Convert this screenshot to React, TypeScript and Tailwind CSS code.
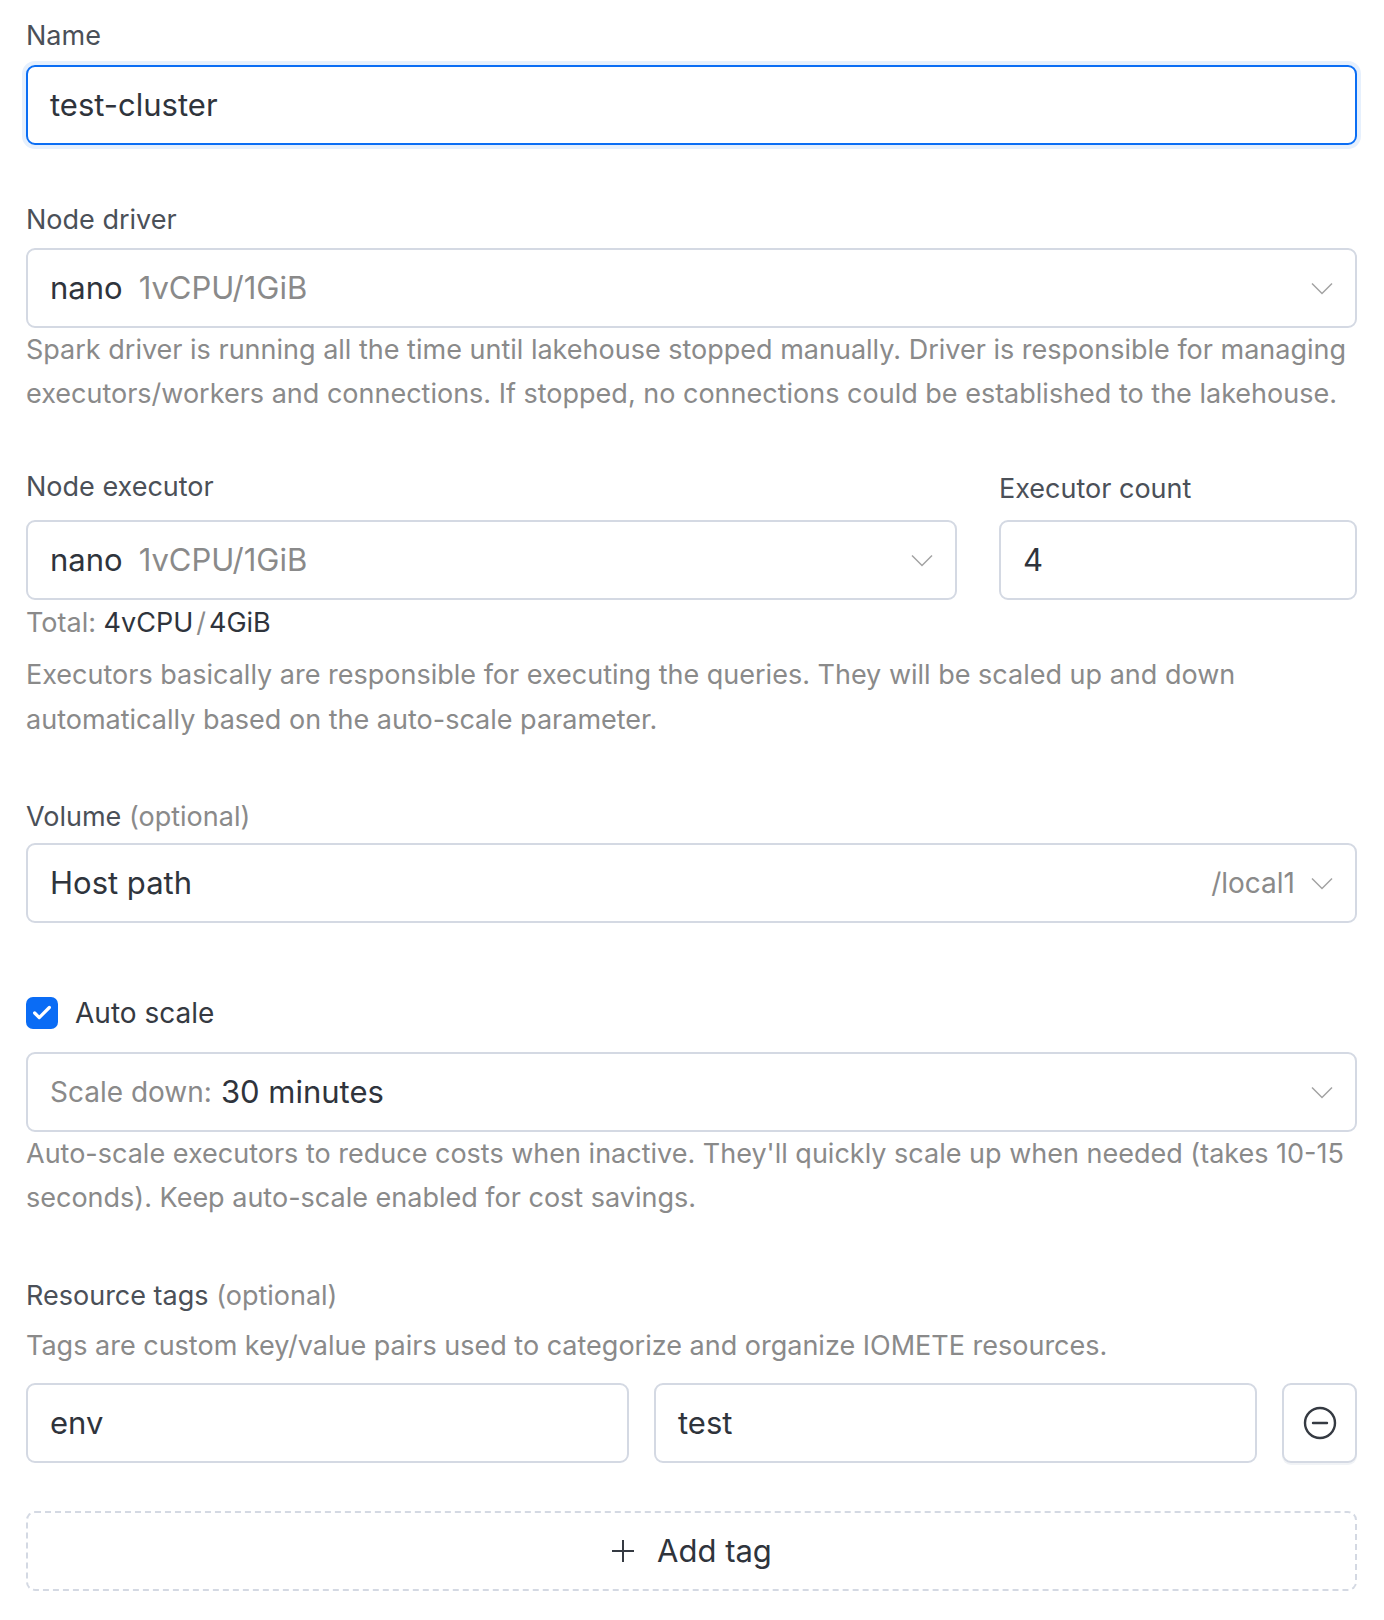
import { Check } from 'lucide-react'

const labelCls = 'text-[27px] leading-[36px] text-[#4b5058]'
const helpCls = 'text-[27px] leading-[44px] text-[#8a8a8a]'
const boxCls =
  'flex h-[80px] items-center rounded-[9px] border-2 border-[#d4d9e3] bg-white px-[22px] text-[31px] text-[#2f343c]'

function Chevron() {
  return (
    <svg width="22" height="13" viewBox="0 0 22 13" fill="none" className="shrink-0">
      <polyline points="1,1.5 11,11.5 21,1.5" stroke="#a3a3a3" strokeWidth="1.5" />
    </svg>
  )
}

function Optional() {
  return <span className="text-[#8a8a8a]"> (optional)</span>
}

function NodeSelect() {
  return (
    <div className={boxCls}>
      <span>nano</span>
      <span className="ml-[16px] text-[#8a8a8a]">1vCPU/1GiB</span>
      <span className="flex-1" />
      <Chevron />
    </div>
  )
}

export default function App() {
  return (
    <div className="min-h-[1620px] bg-white pl-[26px] pr-[27px] font-['Inter',sans-serif]">
      {/* Name */}
      <div className="pt-[18px]">
        <div className={labelCls}>Name</div>
        <div className="mt-[11px] rounded-[9px] shadow-[0_0_0_4px_#e6f0fd]">
          <div className="flex h-[80px] items-center rounded-[9px] border-2 border-[#0b6ef4] px-[22px] text-[31px] text-[#2f343c]">
            test-cluster
          </div>
        </div>
      </div>

      {/* Node driver */}
      <div className="mt-[57px]">
        <div className={labelCls}>Node driver</div>
        <div className="mt-[10px]">
          <NodeSelect />
        </div>
        <p className={helpCls}>
          Spark driver is running all the time until lakehouse stopped manually. Driver is responsible for managing
          executors/workers and connections. If stopped, no connections could be established to the lakehouse.
        </p>
      </div>

      {/* Node executor */}
      <div className="mt-[53px] flex gap-[42px]">
        <div className="flex-1">
          <div className={labelCls}>Node executor</div>
          <div className="mt-[15px]">
            <NodeSelect />
          </div>
        </div>
        <div className="w-[358px]">
          <div className={labelCls + ' pt-[2px]'}>Executor count</div>
          <div className="mt-[13px]">
            <div className={boxCls}>4</div>
          </div>
        </div>
      </div>
      <div className="mt-[5px] text-[27px] leading-[36px] text-[#8a8a8a]">
        Total: <span className="text-[#2f343c]">4vCPU</span>
        <span className="mx-[3px]">/</span>
        <span className="text-[#2f343c]">4GiB</span>
      </div>
      <p className={helpCls + ' mt-[11px] leading-[45px]'}>
        Executors basically are responsible for executing the queries. They will be scaled up and down
        <br />
        automatically based on the auto-scale parameter.
      </p>

      {/* Volume */}
      <div className="mt-[57px]">
        <div className={labelCls}>
          Volume
          <Optional />
        </div>
        <div className="mt-[8px]">
          <div className={boxCls}>
            <span>Host path</span>
            <span className="flex-1" />
            <span className="mr-[16px] text-[28px] text-[#8a8a8a]">/local1</span>
            <Chevron />
          </div>
        </div>
      </div>

      {/* Auto scale */}
      <div className="mt-[72px] flex items-center gap-[17px]">
        <div className="flex h-[32px] w-[32px] items-center justify-center rounded-[7px] bg-[#0a6cf5]">
          <Check className="h-[22px] w-[22px] text-white" strokeWidth={3.5} />
        </div>
        <span className="text-[28px] leading-[36px] text-[#353a42]">Auto scale</span>
      </div>
      <div className="mt-[21px]">
        <div className={boxCls}>
          <span className="text-[28px] text-[#8a8a8a]">Scale down:</span>
          <span className="ml-[9px]">30 minutes</span>
          <span className="flex-1" />
          <Chevron />
        </div>
        <p className={helpCls}>
          Auto-scale executors to reduce costs when inactive. They'll quickly scale up when needed (takes 10-15
          seconds). Keep auto-scale enabled for cost savings.
        </p>
      </div>

      {/* Resource tags */}
      <div className="mt-[58px]">
        <div className={labelCls}>
          Resource tags
          <Optional />
        </div>
        <p className={helpCls + ' mt-[10px]'}>
          Tags are custom key/value pairs used to categorize and organize IOMETE resources.
        </p>
        <div className="mt-[15px] flex gap-[25px]">
          <div className={boxCls + ' flex-1'}>env</div>
          <div className={boxCls + ' flex-1'}>test</div>
          <button className="flex h-[80px] w-[75px] items-center justify-center rounded-[9px] border-2 border-[#d4d9e3] bg-white shadow-[0_2px_0_#f1f3f6]">
            <svg width="34" height="34" viewBox="0 0 34 34" fill="none">
              <circle cx="17" cy="17" r="15" stroke="#353a42" strokeWidth="2.4" />
              <line x1="10" y1="17" x2="24" y2="17" stroke="#353a42" strokeWidth="2.4" strokeLinecap="round" />
            </svg>
          </button>
        </div>
        <button className="mt-[48px] flex h-[80px] w-full items-center justify-center gap-[22px] rounded-[9px] border-2 border-dashed border-[#d4d9e3] bg-white text-[31px] text-[#2f343c]">
          <svg width="24" height="24" viewBox="0 0 24 24" fill="none">
            <line x1="12" y1="1" x2="12" y2="23" stroke="#353a42" strokeWidth="2" />
            <line x1="1" y1="12" x2="23" y2="12" stroke="#353a42" strokeWidth="2" />
          </svg>
          Add tag
        </button>
      </div>
    </div>
  )
}
